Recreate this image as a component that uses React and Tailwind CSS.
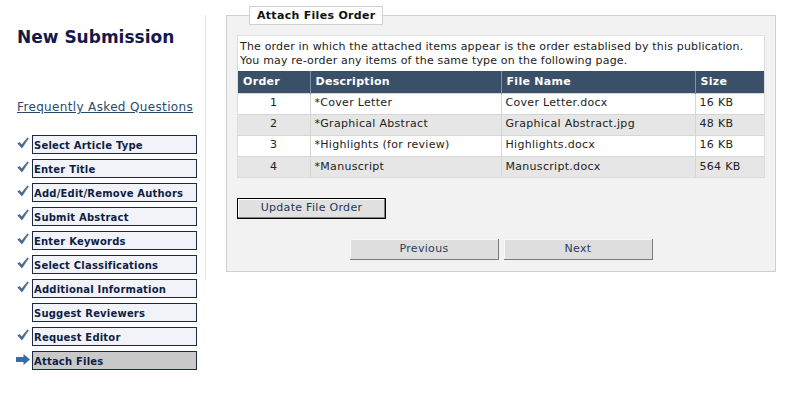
import React from 'react';

const steps = [
  { label: 'Select Article Type', done: true },
  { label: 'Enter Title', done: true },
  { label: 'Add/Edit/Remove Authors', done: true },
  { label: 'Submit Abstract', done: true },
  { label: 'Enter Keywords', done: true },
  { label: 'Select Classifications', done: true },
  { label: 'Additional Information', done: true },
  { label: 'Suggest Reviewers', done: false },
  { label: 'Request Editor', done: true },
  { label: 'Attach Files', current: true },
];

const files = [
  { order: 1, desc: '*Cover Letter', name: 'Cover Letter.docx', size: '16 KB' },
  { order: 2, desc: '*Graphical Abstract', name: 'Graphical Abstract.jpg', size: '48 KB' },
  { order: 3, desc: '*Highlights (for review)', name: 'Highlights.docx', size: '16 KB' },
  { order: 4, desc: '*Manuscript', name: 'Manuscript.docx', size: '564 KB' },
];

function Check() {
  return (
    <svg width="12" height="12" viewBox="0 0 12 12" className="mb-[4px]">
      <path d="M0.3 6.6 L2.6 4.9 L4.6 7.6 L10.4 0.4 L11.8 1.3 L5 11.5 Z" fill="#4a6b93" />
    </svg>
  );
}

function Arrow() {
  return (
    <svg width="14" height="11" viewBox="0 0 14 11" className="mb-[2px] -ml-[1px]">
      <path d="M0 3 H7.5 V0 L14 5.5 L7.5 11 V8 H0 Z" fill="#3b6ca6" />
    </svg>
  );
}

function Sidebar() {
  return (
    <div className="w-[205px] shrink-0 pl-[17px] pt-[27px]">
      <h1 className="text-[17px] leading-[20px] font-bold text-[#15184a]">New Submission</h1>
      <a href="#" className="block mt-[53px] text-[12px] leading-[15px] tracking-[0.35px] text-[#2a4a6c] underline">
        Frequently Asked Questions
      </a>
      <ul className="mt-[20px] flex flex-col gap-[5px]">
        {steps.map((s) => (
          <li key={s.label} className="flex items-center h-[19px]">
            <span className="w-[15px] flex items-center">
              {s.current ? <Arrow /> : s.done ? <Check /> : null}
            </span>
            <span
              className={`w-[165px] h-[19px] border border-[#1b2a48] pl-[1px] pt-[3px] text-[10px] leading-[14px] tracking-[0.2px] font-bold text-[#0f1e45] ${
                s.current ? 'bg-[#c9c9c9]' : 'bg-[#f1f3f8]'
              }`}
            >
              {s.label}
            </span>
          </li>
        ))}
      </ul>
    </div>
  );
}

function FileTable() {
  return (
    <table className="w-full table-fixed border-collapse text-[11px] tracking-[0.3px]">
      <colgroup>
        <col className="w-[72px]" />
        <col className="w-[191px]" />
        <col className="w-[194px]" />
        <col />
      </colgroup>
      <thead>
        <tr className="bg-[#3a5068] text-white font-bold h-[22px]">
          <th className="text-left pl-[5px] font-bold">Order</th>
          <th className="text-left pl-[5px] font-bold border-l border-[#8193a6]">Description</th>
          <th className="text-left pl-[5px] font-bold border-l border-[#8193a6]">File Name</th>
          <th className="text-left pl-[5px] font-bold border-l border-[#8193a6]">Size</th>
        </tr>
      </thead>
      <tbody className="text-[#222]">
        {files.map((f, i) => (
          <tr
            key={f.order}
            className={`h-[21px] border-t border-[#d6d6d6] ${i % 2 ? 'bg-[#e6e6e6]' : 'bg-white'}`}
          >
            <td className="text-center">{f.order}</td>
            <td className="pl-[4px] border-l border-[#d6d6d6]">{f.desc}</td>
            <td className="pl-[4px] border-l border-[#d6d6d6]">{f.name}</td>
            <td className="pl-[4px] border-l border-[#d6d6d6]">{f.size}</td>
          </tr>
        ))}
      </tbody>
    </table>
  );
}

export default function App() {
  return (
    <div
      className="w-[792px] h-[410px] bg-white flex"
      style={{ fontFamily: '"DejaVu Sans", Verdana, sans-serif' }}
    >
      <Sidebar />
      <div className="self-start mt-[15px] w-px h-[265px] bg-[#e6e6e6]" />
      <div className="pl-[20px] pt-[6px]">
        <fieldset className="w-[550px] border border-[#cfcfcf] bg-[#f2f2f2] px-[10px] pb-[11px]">
          <legend className="ml-[12px] h-[19px] border border-[#d0d0d0] bg-white px-[7px] text-[11px] leading-[17px] tracking-[0.3px] font-bold text-[#111]">
            Attach Files Order
          </legend>
          <div className="mt-[10px] bg-white border border-[#dcdcdc] border-t-[#e4e4e4]">
            <p className="px-[2px] pt-[4px] pb-[3px] text-[11px] leading-[14px] tracking-[0.18px] text-[#222]">
              The order in which the attached items appear is the order establised by this publication.
              <br />
              You may re-order any items of the same type on the following page.
            </p>
            <FileTable />
          </div>
          <button className="mt-[20px] w-[149px] h-[21px] border border-black bg-[#e1e1e1] shadow-[inset_-1px_-1px_0_#7d7d7d,inset_1px_1px_0_#ffffff] text-[11px] tracking-[0.3px] text-[#22385a]">
            Update File Order
          </button>
          <div className="mt-[20px] flex justify-center gap-[5px]">
            <button className="w-[149px] h-[21px] bg-[#dedede] shadow-[inset_-1px_-1px_0_#7a7a7a,inset_1px_1px_0_#f7f7f7] text-[11px] tracking-[0.3px] text-[#2a3d5e]">
              Previous
            </button>
            <button className="w-[149px] h-[21px] bg-[#dedede] shadow-[inset_-1px_-1px_0_#7a7a7a,inset_1px_1px_0_#f7f7f7] text-[11px] tracking-[0.3px] text-[#2a3d5e]">
              Next
            </button>
          </div>
        </fieldset>
      </div>
    </div>
  );
}
